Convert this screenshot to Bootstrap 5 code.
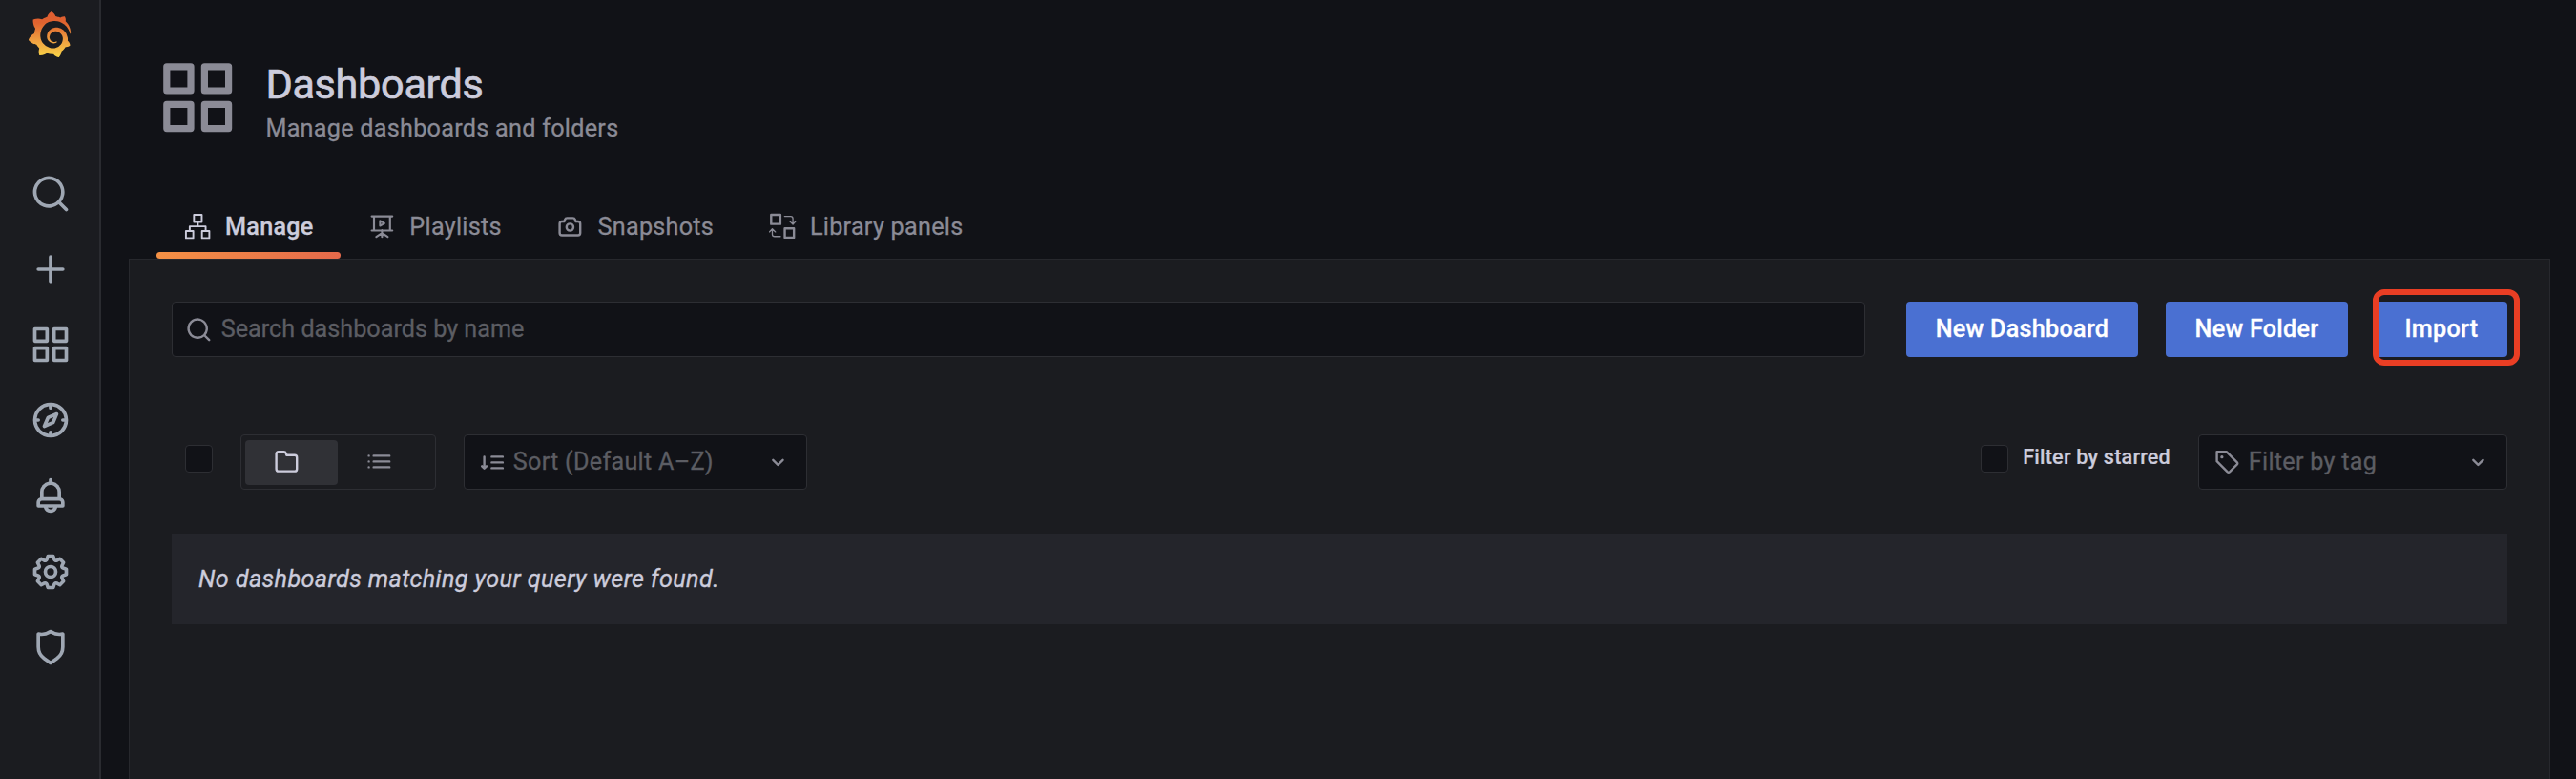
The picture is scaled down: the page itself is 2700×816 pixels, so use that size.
<!DOCTYPE html>
<html lang="en" data-bs-theme="dark">
<head>
<meta charset="utf-8">
<meta name="viewport" content="width=device-width, initial-scale=1">
<title>Dashboards - Grafana</title>
<link href="https://cdn.jsdelivr.net/npm/bootstrap@5.3.0/dist/css/bootstrap.min.css" rel="stylesheet">
<style>
  :root {
    --canvas: #111217;
    --panel: #1b1c20;
    --line: #2d2e33;
    --line-weak: #27282d;
    --text: #ccccdc;
    --text-2: #8b8b96;
    --text-off: #5c5d63;
  }
  body {
    background: var(--canvas);
    color: var(--text);
    font-family: Roboto, "Liberation Sans", sans-serif;
    font-size: 25.2px;
    line-height: 39.6px;
    letter-spacing: .27px;
    height: 816px;
    overflow: hidden;
  }
  svg { display: block; flex: none; fill: currentColor; }
  .side-menu { width: 106px; flex: none; background: var(--panel); border-right: 2px solid #2a2b30; color: #9fa7b3; }
  .brand { height: 163px; padding: 12px 0 0 28px; }
  .side-item { height: 79.2px; padding-left: 1px; }
  .side-item svg { width: 44px; height: 44px; }
  .side-menu a { color: inherit; }
  .page { padding: 0 27px 0 29px; }
  .page-head { height: 271px; padding-left: 29px; }
  .head-row { padding-top: 59px; }
  .head-icon { width: 86.4px; height: 86.4px; color: var(--text-2); margin-right: 28px; }
  h1 { color: var(--text); font-size: 43.2px; line-height: 56px; font-weight: 400; letter-spacing: -.3px; margin: 2px 0 0; -webkit-text-stroke: .7px; }
  .subtitle { color: var(--text-2); line-height: 36px; -webkit-text-stroke: .3px; }
  .tabs { height: 66px; }
  .tabs .nav-link { position: relative; color: var(--text-2); padding: 0 28.8px; height: 66px; gap: 14.4px; padding-bottom: 1px; -webkit-text-stroke: .3px; }
  .tabs svg { width: 28.8px; height: 28.8px; }
  .tabs .active { color: var(--text); font-weight: 500; }
  .tabs .active::after { content: ""; position: absolute; left: 0; right: 0; bottom: 0; height: 7px; border-radius: 4px; background: linear-gradient(90deg, #f59145, #e4694b); }
  .page-panel { background: var(--panel); border: 1px solid var(--line-weak); border-bottom: 0; padding: 44px 44px 0 44px; }
  .field { height: 58px; border: 1px solid var(--line); border-radius: 4px; background: var(--canvas); color: var(--text-off); -webkit-text-stroke: .3px; }
  .field svg { width: 28.8px; height: 28.8px; color: var(--text-2); }
  .field input { background: transparent; border: 0; outline: 0; padding: 0; color: var(--text); letter-spacing: 0; }
  .field input::placeholder { color: var(--text-off); opacity: 1; }
  .search { width: 1775px; padding-left: 13px; gap: 9px; }
  .btn-main { height: 58px; background: #4a70d2; color: #fff; border: 0; border-radius: 4px; font-size: 25.2px; font-weight: 500; line-height: 58px; padding: 0; letter-spacing: .27px; -webkit-text-stroke: .3px; }
  .callout { position: absolute; left: -3px; top: -13px; width: 154px; height: 80px; border: 6.5px solid #e93e24; border-radius: 12px; }
  .filters { margin-top: 81px; }
  .check { width: 29px; height: 29px; border: 1px solid var(--line); border-radius: 4px; background: var(--canvas); margin-top: 11px; }
  .check-all { margin-left: 14px; }
  .layout-switch { width: 205px; height: 58px; border: 1px solid var(--line); border-radius: 4px; padding: 5px 4px; margin-left: 29px; }
  .layout-switch > span { width: 97px; height: 47px; border-radius: 4px; color: var(--text-2); padding-left: 29px; }
  .layout-switch > .on { background: #303136; color: var(--text); }
  .layout-switch svg { width: 28.8px; height: 28.8px; margin-top: -2px; }
  .sort { width: 360px; margin-left: 29px; padding: 0 15px 0 14px; }
  .tagbox { width: 324px; padding: 0 15px; }
  .starred { font-size: 21.6px; font-weight: 500; line-height: 28px; margin: 10px 29px 0 15px; letter-spacing: .2px; -webkit-text-stroke: .2px; }
  .none-found { background: #24252b; height: 95px; margin-top: 46px; padding-left: 28px; font-style: italic; letter-spacing: .39px; -webkit-text-stroke: .35px; }
</style>
</head>
<body class="d-flex">

<nav class="side-menu d-flex flex-column">
  <a class="brand" href="#" aria-label="Grafana">
    <svg width="48" height="48" viewBox="0 0 24 24"><defs><linearGradient id="sun" x1="0" y1="1" x2="0" y2="0"><stop offset="0" stop-color="#f8d548"/><stop offset=".35" stop-color="#f0a141"/><stop offset=".75" stop-color="#e0632f"/><stop offset="1" stop-color="#df5c32"/></linearGradient></defs><path fill="url(#sun)" d="M23.02 10.59a8.578 8.578 0 0 0-.862-3.034 8.911 8.911 0 0 0-1.789-2.445c.337-1.342-.413-2.505-.413-2.505-1.292-.08-2.113.4-2.416.62-.052-.02-.102-.044-.154-.064-.22-.089-.446-.172-.677-.247-.231-.073-.47-.14-.711-.197a9.867 9.867 0 0 0-.875-.161C14.557.753 12.94 0 12.94 0c-1.804 1.145-2.147 2.744-2.147 2.744l-.018.093c-.098.029-.2.057-.298.088-.138.042-.275.094-.413.143-.138.055-.275.107-.41.166a8.869 8.869 0 0 0-1.557.87l-.063-.029c-2.497-.955-4.716.195-4.716.195-.203 2.658.996 4.33 1.235 4.636a11.608 11.608 0 0 0-.607 2.635C1.636 12.677.953 15.014.953 15.014c1.926 2.214 4.171 2.351 4.171 2.351.003-.002.006-.002.006-.005.285.509.615.994.986 1.446.156.19.32.371.488.548-.704 2.009.099 3.68.099 3.68 2.144.08 3.553-.937 3.849-1.173a9.784 9.784 0 0 0 3.164.501h.08l.055-.003.107-.002.103-.005.003.002c1.01 1.44 2.788 1.646 2.788 1.646 1.264-1.332 1.337-2.653 1.337-2.94v-.058c0-.02-.003-.039-.003-.06.265-.187.52-.387.758-.6a7.875 7.875 0 0 0 1.415-1.7c1.43.083 2.437-.885 2.437-.885-.236-1.49-1.085-2.216-1.264-2.354l-.018-.013-.016-.013a.217.217 0 0 1-.031-.02c.008-.092.016-.18.02-.27.011-.162.016-.323.016-.48v-.253l-.005-.098-.008-.135a1.891 1.891 0 0 0-.01-.13c-.003-.042-.008-.083-.013-.125l-.016-.124-.018-.122a6.215 6.215 0 0 0-2.032-3.73 6.015 6.015 0 0 0-3.222-1.46 6.292 6.292 0 0 0-.85-.048l-.107.002h-.063l-.044.003-.104.008a4.777 4.777 0 0 0-3.335 1.695c-.332.4-.592.84-.768 1.297a4.594 4.594 0 0 0-.312 1.817l.003.091c.005.055.007.11.013.164a3.615 3.615 0 0 0 .698 1.82 3.53 3.53 0 0 0 1.827 1.282c.33.098.66.14.971.137.039 0 .078 0 .114-.002l.063-.003c.02 0 .041-.003.062-.003.034-.002.065-.007.099-.01.007 0 .018-.003.028-.003l.031-.005.06-.008a1.18 1.18 0 0 0 .112-.02c.036-.008.072-.013.109-.024a2.634 2.634 0 0 0 .914-.415c.028-.02.056-.041.085-.065a.248.248 0 0 0 .039-.35.244.244 0 0 0-.309-.06l-.078.042c-.09.044-.184.083-.283.116a2.476 2.476 0 0 1-.475.096c-.028.003-.054.006-.083.006l-.083.002c-.026 0-.054 0-.08-.002l-.102-.006h-.012l-.024.006c-.016-.003-.031-.003-.044-.006-.031-.002-.06-.007-.091-.01a2.59 2.59 0 0 1-.724-.213 2.557 2.557 0 0 1-.667-.438 2.52 2.52 0 0 1-.805-1.475 2.306 2.306 0 0 1-.029-.444l.006-.122v-.023l.002-.031c.003-.021.003-.04.005-.06a3.163 3.163 0 0 1 1.352-2.29 3.12 3.12 0 0 1 .937-.43 2.946 2.946 0 0 1 .776-.101h.06l.07.002.045.003h.026l.07.005a4.041 4.041 0 0 1 1.635.49 3.94 3.94 0 0 1 1.602 1.662 3.77 3.77 0 0 1 .397 1.414l.005.076.003.075c.002.026.002.05.002.075 0 .024.003.052 0 .07v.065l-.002.073-.008.174a6.195 6.195 0 0 1-.08.639 5.1 5.1 0 0 1-.267.927 5.31 5.31 0 0 1-.624 1.13 5.052 5.052 0 0 1-3.237 2.014 4.82 4.82 0 0 1-.649.066l-.039.003h-.287a6.607 6.607 0 0 1-1.716-.265 6.776 6.776 0 0 1-3.4-2.274 6.75 6.75 0 0 1-.746-1.15 6.616 6.616 0 0 1-.714-2.596l-.005-.083-.002-.02v-.056l-.003-.073v-.096l-.003-.104v-.07l.003-.163c.008-.22.026-.45.054-.678a8.707 8.707 0 0 1 .28-1.355c.128-.444.286-.872.473-1.277a7.04 7.04 0 0 1 1.456-2.1 5.925 5.925 0 0 1 .953-.763c.169-.111.343-.213.524-.306.089-.05.182-.091.273-.135.047-.02.093-.042.138-.062a7.177 7.177 0 0 1 .714-.267l.145-.045c.049-.015.098-.026.148-.041.098-.029.197-.052.296-.076.049-.013.1-.02.15-.033l.15-.032.151-.028.076-.013.075-.01.153-.024c.057-.01.114-.013.171-.023l.169-.021c.036-.003.073-.008.106-.01l.073-.008.036-.003.042-.002c.057-.003.114-.008.171-.01l.086-.006h.023l.037-.003.145-.007a7.999 7.999 0 0 1 1.708.125 7.917 7.917 0 0 1 2.048.68 8.253 8.253 0 0 1 1.672 1.09l.09.077.089.078c.06.052.114.107.171.159.057.052.112.106.166.16.052.055.107.107.159.164a8.671 8.671 0 0 1 1.41 1.978c.012.026.028.052.04.078l.04.078.075.156c.023.051.05.1.07.153l.065.15a8.848 8.848 0 0 1 .45 1.34.19.19 0 0 0 .201.142.186.186 0 0 0 .172-.184c.01-.246.002-.532-.024-.856z"/></svg>
  </a>
  <a class="side-item d-flex align-items-center justify-content-center" href="#" aria-label="Search"><svg viewBox="0 0 24 24"><path d="M21.71,20.29,18,16.61A9,9,0,1,0,16.61,18l3.68,3.68a1,1,0,0,0,1.42,0A1,1,0,0,0,21.71,20.29ZM11,18a7,7,0,1,1,7-7A7,7,0,0,1,11,18Z"/></svg></a>
  <a class="side-item d-flex align-items-center justify-content-center" href="#" aria-label="Create"><svg viewBox="0 0 24 24"><path d="M19,11H13V5a1,1,0,0,0-2,0v6H5a1,1,0,0,0,0,2h6v6a1,1,0,0,0,2,0V13h6a1,1,0,0,0,0-2Z"/></svg></a>
  <a class="side-item d-flex align-items-center justify-content-center" href="#" aria-label="Dashboards"><svg viewBox="0 0 24 24"><path id="apps" d="M10,13H3a1,1,0,0,0-1,1v7a1,1,0,0,0,1,1h7a1,1,0,0,0,1-1V14A1,1,0,0,0,10,13ZM9,20H4V15H9ZM21,2H14a1,1,0,0,0-1,1v7a1,1,0,0,0,1,1h7a1,1,0,0,0,1-1V3A1,1,0,0,0,21,2ZM20,9H15V4h5Zm1,4H14a1,1,0,0,0-1,1v7a1,1,0,0,0,1,1h7a1,1,0,0,0,1-1V14A1,1,0,0,0,21,13Zm-1,7H15V15h5ZM10,2H3A1,1,0,0,0,2,3v7a1,1,0,0,0,1,1h7a1,1,0,0,0,1-1V3A1,1,0,0,0,10,2ZM9,9H4V4H9Z"/></svg></a>
  <a class="side-item d-flex align-items-center justify-content-center" href="#" aria-label="Explore"><svg viewBox="0 0 24 24"><path d="M12,2A10,10,0,1,0,22,12,10,10,0,0,0,12,2Zm1,17.93V19a1,1,0,0,0-2,0v.93A8,8,0,0,1,4.07,13H5a1,1,0,0,0,0-2H4.07A8,8,0,0,1,11,4.07V5a1,1,0,0,0,2,0V4.07A8,8,0,0,1,19.93,11H19a1,1,0,0,0,0,2h.93A8,8,0,0,1,13,19.93ZM15.14,7.55l-5,2.12a1,1,0,0,0-.52.52l-2.12,5a1,1,0,0,0,.21,1.1,1,1,0,0,0,.7.29.93.93,0,0,0,.4-.08l5-2.12a1,1,0,0,0,.52-.52l2.12-5a1,1,0,0,0-1.31-1.31Zm-2.49,5.1-2.28,1,1-2.28,2.28-1Z"/></svg></a>
  <a class="side-item d-flex align-items-center justify-content-center" href="#" aria-label="Alerting"><svg viewBox="0 0 24 24"><path d="M18,13.18V10a6,6,0,0,0-5-5.91V3a1,1,0,0,0-2,0V4.09A6,6,0,0,0,6,10v3.18A3,3,0,0,0,4,16v2a1,1,0,0,0,1,1H8.14a4,4,0,0,0,7.72,0H19a1,1,0,0,0,1-1V16A3,3,0,0,0,18,13.18ZM8,10a4,4,0,0,1,8,0v3H8Zm4,10a2,2,0,0,1-1.72-1h3.44A2,2,0,0,1,12,20Zm6-3H6V16a1,1,0,0,1,1-1H17a1,1,0,0,1,1,1Z"/></svg></a>
  <a class="side-item d-flex align-items-center justify-content-center" href="#" aria-label="Configuration"><svg viewBox="0 0 24 24"><path d="M21.32,9.55l-1.89-.63.89-1.78A1,1,0,0,0,20.13,6L18,3.87a1,1,0,0,0-1.15-.19l-1.78.89-.63-1.89A1,1,0,0,0,13.5,2h-3a1,1,0,0,0-.95.68L8.92,4.57,7.14,3.68A1,1,0,0,0,6,3.87L3.87,6a1,1,0,0,0-.19,1.15l.89,1.78-1.89.63A1,1,0,0,0,2,10.5v3a1,1,0,0,0,.68.95l1.89.63-.89,1.78A1,1,0,0,0,3.87,18L6,20.13a1,1,0,0,0,1.15.19l1.78-.89.63,1.89a1,1,0,0,0,.95.68h3a1,1,0,0,0,.95-.68l.63-1.89,1.78.89A1,1,0,0,0,18,20.13L20.13,18a1,1,0,0,0,.19-1.15l-.89-1.78,1.89-.63A1,1,0,0,0,22,13.5v-3A1,1,0,0,0,21.32,9.55ZM20,12.78l-1.2.4A2,2,0,0,0,17.64,16l.57,1.14-1.1,1.1L16,17.64a2,2,0,0,0-2.79,1.16l-.4,1.2H11.22l-.4-1.2A2,2,0,0,0,8,17.64l-1.14.57-1.1-1.1L6.36,16A2,2,0,0,0,5.2,13.18L4,12.78V11.22l1.2-.4A2,2,0,0,0,6.36,8L5.79,6.89l1.1-1.1L8,6.36A2,2,0,0,0,10.82,5.2l.4-1.2h1.56l.4,1.2A2,2,0,0,0,16,6.36l1.14-.57,1.1,1.1L17.64,8a2,2,0,0,0,1.16,2.79l1.2.4ZM12,8a4,4,0,1,0,4,4A4,4,0,0,0,12,8Zm0,6a2,2,0,1,1,2-2A2,2,0,0,1,12,14Z"/></svg></a>
  <a class="side-item d-flex align-items-center justify-content-center" href="#" aria-label="Server Admin"><svg viewBox="0 0 24 24"><path d="M19.63,3.65a1,1,0,0,0-.84-.2,8,8,0,0,1-6.22-1.27,1,1,0,0,0-1.14,0A8,8,0,0,1,5.21,3.45a1,1,0,0,0-.84.2A1,1,0,0,0,4,4.43v7.45a9,9,0,0,0,3.77,7.33l3.65,2.6a1,1,0,0,0,1.16,0l3.65-2.6A9,9,0,0,0,20,11.88V4.43A1,1,0,0,0,19.63,3.65ZM18,11.88a7,7,0,0,1-2.93,5.7L12,19.77,8.93,17.58A7,7,0,0,1,6,11.88V5.58a10,10,0,0,0,6-1.39,10,10,0,0,0,6,1.39Z"/></svg></a>
</nav>

<main class="page d-flex flex-column flex-grow-1">
  <header class="page-head d-flex flex-column justify-content-between">
    <div class="head-row d-flex">
      <svg class="head-icon" viewBox="0 0 24 24"><use href="#apps"/></svg>
      <div>
        <h1>Dashboards</h1>
        <div class="subtitle">Manage dashboards and folders</div>
      </div>
    </div>
    <ul class="tabs nav">
      <li class="nav-item"><a class="nav-link active d-flex align-items-center" href="#">
        <svg viewBox="0 0 24 24"><g fill="none" stroke="currentColor" stroke-width="1.6" stroke-linejoin="round"><path d="M8.6 1.6h6.8V8H8.6zM1.6 15.8H8V22H1.6zM15.6 15.8H22V22h-6.4zM12 8v3.8M4.9 15.8v-4h13.9v4"/></g></svg>Manage</a></li>
      <li class="nav-item"><a class="nav-link d-flex align-items-center" href="#">
        <svg viewBox="0 0 24 24"><g fill="none" stroke="currentColor" stroke-width="1.8" stroke-linecap="round" stroke-linejoin="round"><path d="M3 3h18M3 15.4h18M5 3v12M19 3v12M12 15v6M7 21l5-3.4 5 3.4"/><path d="M10.3 6.9v4.4l3.8-2.2z" stroke-width="1.7"/></g></svg>Playlists</a></li>
      <li class="nav-item"><a class="nav-link d-flex align-items-center" href="#">
        <svg viewBox="0 0 24 24"><path d="M19,6.5H17.72l-.32-1a3,3,0,0,0-2.84-2H9.44A3,3,0,0,0,6.6,5.55l-.32,1H5a3,3,0,0,0-3,3v8a3,3,0,0,0,3,3H19a3,3,0,0,0,3-3v-8A3,3,0,0,0,19,6.5Zm1,11a1,1,0,0,1-1,1H5a1,1,0,0,1-1-1v-8a1,1,0,0,1,1-1H7a1,1,0,0,0,1-.68l.54-1.64a1,1,0,0,1,.95-.68h5.12a1,1,0,0,1,.95.68l.54,1.64A1,1,0,0,0,17,8.5h2a1,1,0,0,1,1,1Zm-8-9a4,4,0,1,0,4,4A4,4,0,0,0,12,8.5Zm0,6a2,2,0,1,1,2-2A2,2,0,0,1,12,14.5Z"/></svg>Snapshots</a></li>
      <li class="nav-item"><a class="nav-link d-flex align-items-center" href="#">
        <svg viewBox="0 0 24 24"><g fill="none" stroke="currentColor"><path stroke-width="2" stroke-linejoin="round" d="M1.9 1.7h8v8h-8zM13.8 13.6h8v8h-8z"/><path stroke-width="1.1" stroke-linecap="round" stroke-linejoin="round" d="M13.6 3h5.4c1.5 0 1.9.8 1.9 1.9v4.6M18.2 7.4l2.7 2.6 2.4-2.6M10 20.6H4.9c-1.5 0-2-.8-2-1.9v-4.6M.4 16.6L2.9 14l2.7 2.6"/></g></svg>Library panels</a></li>
    </ul>
  </header>

  <section class="page-panel flex-grow-1">
    <div class="d-flex">
      <div class="field search d-flex align-items-center">
        <svg viewBox="0 0 24 24"><path d="M21.71,20.29,18,16.61A9,9,0,1,0,16.61,18l3.68,3.68a1,1,0,0,0,1.42,0A1,1,0,0,0,21.71,20.29ZM11,18a7,7,0,1,1,7-7A7,7,0,0,1,11,18Z"/></svg>
        <input class="flex-grow-1" type="text" placeholder="Search dashboards by name" aria-label="Search dashboards by name">
      </div>
      <div class="d-flex ms-auto">
        <a class="btn btn-main" style="width:243px" href="#">New Dashboard</a>
        <a class="btn btn-main" style="width:191px;margin:0 29px" href="#">New Folder</a>
        <div class="position-relative">
          <a class="btn btn-main" style="width:138px" href="#">Import</a>
          <span class="callout"></span>
        </div>
      </div>
    </div>

    <div class="filters d-flex align-items-start">
      <span class="check check-all"></span>
      <div class="layout-switch d-flex">
        <span class="on d-flex align-items-center"><svg viewBox="0 0 24 24"><path d="M19,5.5H12.72l-.32-1a3,3,0,0,0-2.84-2H5a3,3,0,0,0-3,3v13a3,3,0,0,0,3,3H19a3,3,0,0,0,3-3V8.5A3,3,0,0,0,19,5.5Zm1,13a1,1,0,0,1-1,1H5a1,1,0,0,1-1-1V5.5a1,1,0,0,1,1-1H9.56a1,1,0,0,1,.95.68l.54,1.64A1,1,0,0,0,12,7.5h7a1,1,0,0,1,1,1Z"/></svg></span>
        <span class="d-flex align-items-center"><svg viewBox="0 0 24 24"><g stroke="currentColor" stroke-width="2" stroke-linecap="round"><path d="M7.2 7H21M7.2 12H21M7.2 17H21M3 7h.01M3 12h.01M3 17h.01"/></g></svg></span>
      </div>
      <div class="field sort d-flex align-items-center">
        <svg viewBox="0 0 24 24"><g fill="none" stroke="currentColor" stroke-width="2" stroke-linecap="round" stroke-linejoin="round"><path d="M12 7h9.6M12 12h9.6M12 17h9.6M5.5 7v10M3.5 15.3l2 2 2-2"/></g></svg>
        <span class="ms-1 ps-1">Sort (Default A–Z)</span>
        <svg class="ms-auto" viewBox="0 0 24 24"><path d="M17,9.17a1,1,0,0,0-1.41,0L12,12.71,8.46,9.17a1,1,0,0,0-1.41,0,1,1,0,0,0,0,1.42l4.24,4.24a1,1,0,0,0,1.42,0L17,10.59A1,1,0,0,0,17,9.17Z"/></svg>
      </div>
      <span class="check ms-auto"></span>
      <span class="starred">Filter by starred</span>
      <div class="field tagbox d-flex align-items-center">
        <svg viewBox="0 0 24 24"><path fill="none" stroke="currentColor" stroke-width="2" stroke-linejoin="round" d="M3 2.6h8.4l9.1 9.1a1.6 1.6 0 0 1 0 2.2l-6.2 6.2a1.6 1.6 0 0 1-2.2 0L3 11z"/><circle cx="7.4" cy="7.2" r="1.35"/></svg>
        <span class="ms-2">Filter by tag</span>
        <svg class="ms-auto" viewBox="0 0 24 24"><path d="M17,9.17a1,1,0,0,0-1.41,0L12,12.71,8.46,9.17a1,1,0,0,0-1.41,0,1,1,0,0,0,0,1.42l4.24,4.24a1,1,0,0,0,1.42,0L17,10.59A1,1,0,0,0,17,9.17Z"/></svg>
      </div>
    </div>

    <div class="none-found d-flex align-items-center">No dashboards matching your query were found.</div>
  </section>
</main>

<script src="https://cdn.jsdelivr.net/npm/bootstrap@5.3.0/dist/js/bootstrap.bundle.min.js"></script>
</body>
</html>
